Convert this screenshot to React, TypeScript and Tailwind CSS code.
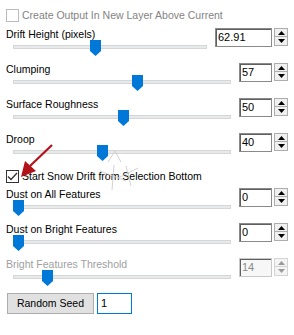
import React from "react";

type Row = {
  label: string;
  value: string;
  thumb: number;
  wide?: boolean;
  disabled?: boolean;
};

const rowsTop: Row[] = [
  { label: "Drift Height (pixels)", value: "62.91", thumb: 77, wide: true },
  { label: "Clumping", value: "57", thumb: 119 },
  { label: "Surface Roughness", value: "50", thumb: 105 },
  { label: "Droop", value: "40", thumb: 84 },
];

const rowsBottom: Row[] = [
  { label: "Dust on All Features", value: "0", thumb: 0 },
  { label: "Dust on Bright Features", value: "0", thumb: 0 },
  { label: "Bright Features Threshold", value: "14", thumb: 29, disabled: true },
];

const Spinner = ({ disabled }: { disabled?: boolean }) => {
  const tri = disabled ? "#9a9a9a" : "#000";
  const btn = disabled
    ? "flex h-[9px] w-[14px] items-center justify-center border border-[#d4d4d4] bg-[#f4f4f4]"
    : "flex h-[9px] w-[14px] items-center justify-center border border-[#adadad] bg-[#f0f0f0]";
  return (
    <div className="flex flex-col">
      <div className={btn}>
        <svg width="7" height="4" viewBox="0 0 7 4">
          <polygon points="0,4 7,4 3.5,0" fill={tri} />
        </svg>
      </div>
      <div className={btn + " -mt-px h-[10px]"}>
        <svg width="7" height="4" viewBox="0 0 7 4">
          <polygon points="0,0 7,0 3.5,4" fill={tri} />
        </svg>
      </div>
    </div>
  );
};

const SliderRow = ({ row }: { row: Row }) => (
  <div className="flex h-[35px] gap-[8px] pr-[6px]">
    <div className="flex flex-1 flex-col">
      <div
        className={
          "-mt-[1px] h-[14px] text-[10.5px] leading-[14px] " +
          (row.disabled ? "text-[#a0a0a0]" : "text-black")
        }
      >
        {row.label}
      </div>
      <div className="relative ml-[7px] mt-[4px] h-[4px] border border-[#d6d6d6] bg-[#e7eaea]">
        <svg
          className="absolute -top-[6px]"
          style={{ left: row.thumb - 1 }}
          width="11"
          height="16"
          viewBox="0 0 11 16"
        >
          <polygon points="0,0 11,0 11,11 5.5,16 0,11" fill="#0078d7" />
        </svg>
      </div>
    </div>
    <div className="flex h-[19px] gap-[2px]">
      <div
        className={
          "flex h-[19px] items-center border pl-[2px] text-[11px] shadow-[inset_1px_1px_0_#5f5f5f] " +
          (row.wide ? "w-[57px] " : "w-[33px] ") +
          (row.disabled
            ? "border-[#c8c8c8] bg-[#f7f7f7] text-[#8a8a8a]"
            : "border-[#8a8a8a] bg-white text-black")
        }
      >
        {row.value}
      </div>
      <Spinner disabled={row.disabled} />
    </div>
  </div>
);

export default function App() {
  return (
    <div
      className="relative h-[335px] w-[294px] overflow-hidden bg-white pl-[6px]"
      style={{ fontFamily: '"Liberation Sans", Arial, sans-serif' }}
    >
      <div className="flex h-[28px] items-start gap-[3px] pt-[9px]">
        <div className="h-[13px] w-[13px] border border-[#bcbcbc] bg-white" />
        <span className="-mt-[1px] text-[10.5px] leading-[14px] text-[#838383]">
          Create Output In New Layer Above Current
        </span>
      </div>

      {rowsTop.map((r) => (
        <SliderRow key={r.label} row={r} />
      ))}

      <div className="flex h-[20px] items-start gap-[3px] pt-[2px]">
        <div className="flex h-[13px] w-[13px] items-center justify-center border border-[#333] bg-white">
          <svg width="11" height="9" viewBox="0 0 11 9">
            <polyline points="1,4.5 4,7.5 10,1" fill="none" stroke="#333" strokeWidth="1.3" />
          </svg>
        </div>
        <span className="-mt-[1px] text-[10.5px] leading-[14px] text-black">
          Start Snow Drift from Selection Bottom
        </span>
      </div>

      {rowsBottom.map((r) => (
        <SliderRow key={r.label} row={r} />
      ))}

      <div className="flex items-center gap-[3px] pl-[1px]">
        <button className="flex h-[21px] w-[87px] items-center justify-center border border-[#adadad] bg-[#e1e1e1] text-[10.5px] text-black">
          Random Seed
        </button>
        <div className="flex h-[21px] w-[35px] items-center border border-[#0078d7] bg-white pl-[3px] text-[11px] text-black">
          1
        </div>
      </div>

      {/* annotation arrow + faint cursor ghost over the dialog */}
      <svg className="pointer-events-none absolute left-0 top-0" width="294" height="335">
        <g stroke="#cfcfcf" strokeWidth="1" fill="none" opacity="0.9">
          <polyline points="108,162 115,151 121,162" />
          <line x1="100" y1="171" x2="126" y2="181" />
          <line x1="118" y1="178" x2="138" y2="168" />
          <line x1="114" y1="165" x2="112" y2="190" />
          <line x1="126" y1="166" x2="131" y2="186" />
        </g>
        <line x1="52" y1="145" x2="30" y2="166" stroke="#b3121a" strokeWidth="2.2" />
        <polygon points="21,177 25,161 36,171" fill="#b3121a" />
      </svg>
    </div>
  );
}
